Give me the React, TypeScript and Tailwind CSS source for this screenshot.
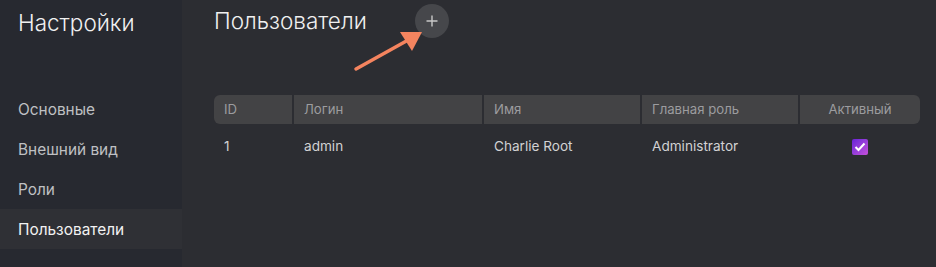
import React from 'react';

const navItems = ['Основные', 'Внешний вид', 'Роли', 'Пользователи'];

const columns = [
  { label: 'ID', w: 'w-[78px]', center: false, round: 'rounded-l-md' },
  { label: 'Логин', w: 'w-[188px]', center: false, round: '' },
  { label: 'Имя', w: 'w-[156px]', center: false, round: '' },
  { label: 'Главная роль', w: 'w-[156px]', center: false, round: '' },
  { label: 'Активный', w: 'w-[120px]', center: true, round: 'rounded-r-md' },
];

const App: React.FC = () => {
  return (
    <div className="flex h-[267px] w-[936px] bg-[#2c2d32] font-['Inter',sans-serif] overflow-hidden">
      {/* Sidebar */}
      <aside className="w-[182px] shrink-0 bg-[#272930] flex flex-col">
        <h1 className="text-[22.5px] font-light text-[#f0f0f0] pl-[18px] pt-[6px] h-[89px]">Настройки</h1>
        {navItems.map((item) => {
          const active = item === 'Пользователи';
          return (
            <div
              key={item}
              className={`h-[40px] flex items-center pl-[18px] pt-[2px] text-[15.4px] ${
                active ? 'bg-[#2f3035] text-[#f2f2f2]' : 'text-[#bfc0c3]'
              }`}
            >
              {item}
            </div>
          );
        })}
      </aside>

      {/* Main */}
      <main className="flex-1 pl-[32px] pr-[16px]">
        <div className="relative flex items-center h-[42px]">
          <h2 className="text-[22.5px] font-light text-[#f0f0f0] pb-[1px]">Пользователи</h2>
          <button className="ml-[48px] w-[34px] h-[34px] rounded-full bg-[#46474b] flex items-center justify-center">
            <svg width="14" height="14" viewBox="0 0 14 14">
              <path d="M7 1.5v11M1.5 7h11" stroke="#c8c8c8" strokeWidth="1.4" />
            </svg>
          </button>
          {/* arrow annotation */}
          <svg className="absolute left-[136px] top-[27px]" width="80" height="50" viewBox="0 0 80 50">
            <line x1="6" y1="42" x2="60" y2="12" stroke="#f4845f" strokeWidth="3.5" strokeLinecap="round" />
            <polygon points="72,5 50,5 62,24" fill="#f4845f" />
          </svg>
        </div>

        <div className="mt-[53px]">
          <div className="flex gap-[2px] h-[29px]">
            {columns.map((c) => (
              <div
                key={c.label}
                className={`${c.w} ${c.round} bg-[#434345] text-[13.2px] text-[#9c9c9f] px-[10px] flex items-center ${
                  c.center ? 'justify-center' : ''
                }`}
              >
                {c.label}
              </div>
            ))}
          </div>
          <div className="flex gap-[2px] h-[45px] items-center text-[13.6px] text-[#d2d2d4]">
            <div className="w-[78px] px-[10px]">1</div>
            <div className="w-[188px] px-[10px]">admin</div>
            <div className="w-[156px] px-[10px]">Charlie Root</div>
            <div className="w-[156px] px-[10px]">Administrator</div>
            <div className="w-[120px] flex justify-center">
              <div className="w-[16px] h-[16px] rounded-[2px] bg-gradient-to-br from-[#6a1fd8] to-[#c64fd9] flex items-center justify-center">
                <svg width="12" height="10" viewBox="0 0 12 10">
                  <path d="M1.5 5l3 3 6-6.5" stroke="#ffffff" strokeWidth="2" fill="none" />
                </svg>
              </div>
            </div>
          </div>
        </div>
      </main>
    </div>
  );
};

export default App;
